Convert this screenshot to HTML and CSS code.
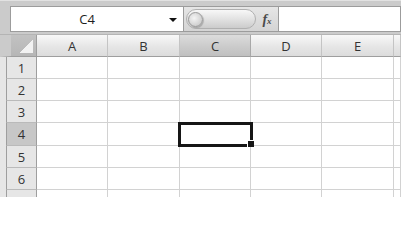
FILE: index.html
```html
<!DOCTYPE html>
<html>
<head>
<meta charset="utf-8">
<link rel="stylesheet" href="styles.css">
</head>
<body>
<div class="app">
  <div class="bar">
    <div class="namebox"><span class="ref">C4</span><span class="arrow"></span></div>
    <div class="tools">
      <div class="pill"><span class="knob"></span></div>
      <span class="fx"><span class="f">f</span><span class="x">x</span></span>
    </div>
    <div class="formula"></div>
  </div>
  <div class="sheet">
    <div class="row head">
      <div class="corner"><span class="tri"></span></div>
      <div class="ch wa">A</div><div class="ch wb">B</div><div class="ch wc on">C</div><div class="ch wd">D</div><div class="ch we">E</div><div class="ch wf"></div>
    </div>
    <div class="row r22"><div class="rh">1</div><div class="c wa"></div><div class="c wb"></div><div class="c wc"></div><div class="c wd"></div><div class="c we"></div><div class="c wf"></div></div>
    <div class="row r22"><div class="rh">2</div><div class="c wa"></div><div class="c wb"></div><div class="c wc"></div><div class="c wd"></div><div class="c we"></div><div class="c wf"></div></div>
    <div class="row r22"><div class="rh">3</div><div class="c wa"></div><div class="c wb"></div><div class="c wc"></div><div class="c wd"></div><div class="c we"></div><div class="c wf"></div></div>
    <div class="row r23"><div class="rh on">4</div><div class="c wa"></div><div class="c wb"></div><div class="c wc sel"></div><div class="c wd"></div><div class="c we"></div><div class="c wf"></div></div>
    <div class="row r22"><div class="rh">5</div><div class="c wa"></div><div class="c wb"></div><div class="c wc"></div><div class="c wd"></div><div class="c we"></div><div class="c wf"></div></div>
    <div class="row r22"><div class="rh">6</div><div class="c wa"></div><div class="c wb"></div><div class="c wc"></div><div class="c wd"></div><div class="c we"></div><div class="c wf"></div></div>
    <div class="row last"><div class="rh"></div><div class="c wa"></div><div class="c wb"></div><div class="c wc"></div><div class="c wd"></div><div class="c we"></div><div class="c wf"></div></div>
  </div>
</div>
</body>
</html>
```
FILE: styles.css
```css
html, body {
  margin: 0;
  padding: 0;
  background: #ffffff;
  font-family: "Open Sans", "Noto Sans", sans-serif;
}
.app {
  width: 401px;
  height: 202px;
  overflow: hidden;
  background: #ffffff;
}
.bar {
  display: flex;
  height: 35px;
  box-sizing: border-box;
  background: #cbcbcb;
  border-top: 1px solid #e2e2e2;
  padding: 5px 0 3px 10px;
  border-bottom: 1px solid #b4b4b4;
}
.namebox {
  width: 174px;
  height: 26px;
  box-sizing: border-box;
  background: #ffffff;
  border: 1px solid #9c9c9c;
  display: flex;
  align-items: center;
}
.ref {
  flex: 1;
  text-align: center;
  font-size: 13px;
  color: #1e1e1e;
  padding-left: 4px;
}
.arrow {
  width: 0;
  height: 0;
  border-left: 4px solid transparent;
  border-right: 4px solid transparent;
  border-top: 4px solid #111111;
  margin: 1px 6px 0 10px;
}
.tools {
  width: 94px;
  height: 26px;
  display: flex;
  align-items: center;
  background: linear-gradient(#e6e6e6, #d4d4d4);
  box-sizing: border-box;
  border-top: 1px solid #9c9c9c;
  border-bottom: 1px solid #9c9c9c;
}
.pill {
  width: 70px;
  height: 20px;
  margin-left: 2px;
  box-sizing: border-box;
  border: 1px solid #b0b0b0;
  border-radius: 10px;
  background: linear-gradient(#f8f8f8, #e2e2e2 50%, #cccccc);
  display: flex;
  align-items: center;
}
.knob {
  width: 15px;
  height: 15px;
  margin-left: 1px;
  box-sizing: border-box;
  border-radius: 50%;
  border: 1px solid #9a9a9a;
  background: radial-gradient(circle at 40% 40%, #f4f4f4, #d0d0d0 70%, #b4b4b4);
  box-shadow: 1px 1px 1px rgba(0,0,0,0.2);
}
.fx {
  flex: 1;
  text-align: center;
  font-family: "Liberation Serif", serif;
  font-style: italic;
  font-weight: bold;
  color: #4a4a4a;
  line-height: 1;
}
.fx .f {
  font-size: 14px;
}
.fx .x {
  font-size: 9px;
}
.formula {
  flex: 1;
  height: 26px;
  box-sizing: border-box;
  background: #ffffff;
  border: 1px solid #9c9c9c;
}
.sheet {
  background: #e6e6e6;
  padding-left: 6px;
}
.row {
  display: flex;
}
.row.head { height: 22px; }
.row.r22 { height: 22px; }
.row.r23 { height: 23px; }
.row.last { height: 7px; }
.corner {
  box-sizing: border-box;
  border-left: 11px solid #cbcbcb;
  border-right: 1px solid #9e9e9e;
  border-bottom: 1px solid #9e9e9e;
  background: linear-gradient(#c2c2c2, #b6b6b6);
  display: flex;
  align-items: flex-end;
  justify-content: flex-end;
  padding: 3px;
  margin-left: -6px;
  width: 37px;
}
.tri {
  width: 14px;
  height: 14px;
  background: linear-gradient(135deg, transparent 50%, #f2f2f2 50%);
}
.ch {
  box-sizing: border-box;
  background: linear-gradient(#f8f8f8, #e6e6e6 55%, #dcdcdc);
  border-right: 1px solid #c4c4c4;
  border-bottom: 1px solid #9e9e9e;
  font-size: 13px;
  color: #333333;
  display: flex;
  align-items: center;
  justify-content: center;
}
.ch.on {
  background: linear-gradient(#dcdcdc, #cbcbcb 55%, #c0c0c0);
  border-right-color: #a8a8a8;
}
.rh {
  width: 31px;
  box-sizing: border-box;
  background: #e6e6e6;
  border-left: 1px solid #9e9e9e;
  border-right: 1px solid #9e9e9e;
  border-bottom: 1px solid #bababa;
  font-size: 13px;
  color: #333333;
  display: flex;
  align-items: center;
  justify-content: center;
}
.rh.on {
  background: #c7c7c7;
}
.c {
  box-sizing: border-box;
  background: #ffffff;
  border-right: 1px solid #d2d2d2;
  border-bottom: 1px solid #d2d2d2;
}
.last .c, .last .rh {
  border-bottom: none;
}
.wa { width: 71px; }
.wb { width: 72px; }
.wc { width: 71px; }
.wd { width: 71px; }
.we { width: 72px; }
.wf { flex: 1; }
.sel {
  position: relative;
  z-index: 2;
}
.sel::after {
  content: "";
  position: absolute;
  left: -2px;
  top: -1px;
  width: 75px;
  height: 25px;
  box-sizing: border-box;
  border: 3px solid #161616;
}
.sel::before {
  content: "";
  position: absolute;
  right: -4px;
  bottom: -2px;
  width: 6px;
  height: 6px;
  background: #161616;
  border: 1px solid #ffffff;
  border-right: none;
  border-bottom: none;
  z-index: 1;
}
```
